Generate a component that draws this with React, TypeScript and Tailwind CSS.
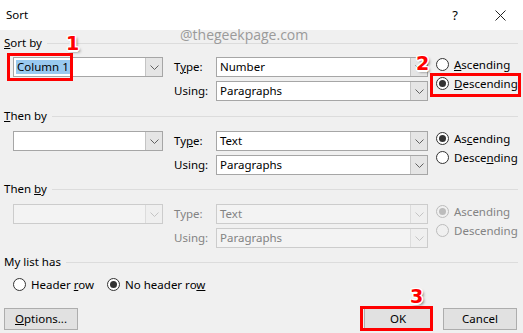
import React from 'react';

const Chevron = ({ disabled }: { disabled?: boolean }) => (
  <svg width="9" height="5" viewBox="0 0 9 5">
    <polyline points="0.5,0.5 4.5,4.5 8.5,0.5" fill="none" stroke={disabled ? '#c4c4c4' : '#606060'} strokeWidth="1" />
  </svg>
);

const Combo = ({ value, disabled, selected, width }: { value?: string; disabled?: boolean; selected?: boolean; width: string }) => (
  <div className={`flex h-[20px] border ${width} ${disabled ? 'border-[#cccccc] bg-[#f3f3f3] text-[#838383]' : 'border-[#a6a6a6] bg-white text-black'}`}>
    <div className="flex-1 flex items-center pl-[2px] overflow-hidden">
      {value && <span className={`px-[1px] leading-[14px] ${selected ? 'bg-[#99c9ef]' : ''}`}>{value}</span>}
    </div>
    <div className={`w-[17px] flex items-center justify-center border-l ${disabled ? 'border-[#dcdcdc] bg-[#efefef]' : 'border-[#c4c4c4] bg-[#e5e5e5]'}`}>
      <Chevron disabled={disabled} />
    </div>
  </div>
);

const Radio = ({ checked, disabled, children }: { checked?: boolean; disabled?: boolean; children: React.ReactNode }) => (
  <div className={`flex items-center gap-[5px] h-[19px] ${disabled ? 'text-[#838383]' : 'text-black'}`}>
    <span className={`w-[13px] h-[13px] rounded-full border flex items-center justify-center ${disabled ? 'border-[#bcbcbc] bg-[#f0f0f0]' : 'border-[#333333] bg-white'}`}>
      {checked && <span className={`w-[7px] h-[7px] rounded-full ${disabled ? 'bg-[#bcbcbc]' : 'bg-[#333333]'}`} />}
    </span>
    <span>{children}</span>
  </div>
);

const Header = ({ children, className }: { children: React.ReactNode; className?: string }) => (
  <div className={`flex items-center h-[16px] pl-[4px] pr-[5px] ${className ?? ''}`}>
    <span>{children}</span>
    <div className="flex-1 h-px bg-[#dcdcdc] ml-[5px]" />
  </div>
);

type GroupProps = {
  combo?: string;
  selected?: boolean;
  disabled?: boolean;
  type: string;
  typeLabel: React.ReactNode;
  ascLabel: React.ReactNode;
  descLabel: React.ReactNode;
  descending?: boolean;
  className?: string;
};

const Group = ({ combo, selected, disabled, type, typeLabel, ascLabel, descLabel, descending, className }: GroupProps) => (
  <div className={`flex pl-[13px] ${className ?? ''}`}>
    <Combo value={combo} selected={selected} disabled={disabled} width="w-[150px]" />
    <div className={`ml-[11px] flex flex-col gap-[4px] ${disabled ? 'text-[#838383]' : ''}`}>
      <div className="flex items-center h-[20px]">
        <span className="w-[42px]">{typeLabel}</span>
        <Combo value={type} disabled={disabled} width="w-[212px]" />
      </div>
      <div className="flex items-center h-[20px]">
        <span className="w-[42px]">Using:</span>
        <Combo value="Paragraphs" disabled={disabled} width="w-[212px]" />
      </div>
    </div>
    <div className="ml-[8px] -mt-[2px] flex flex-col">
      <Radio checked={!descending} disabled={disabled}>{ascLabel}</Radio>
      <Radio checked={descending} disabled={disabled}>{descLabel}</Radio>
    </div>
  </div>
);

const Button = ({ children, className }: { children: React.ReactNode; className?: string }) => (
  <div className={`h-[22px] flex items-center justify-center border border-[#adadad] bg-[#e1e1e1] ${className ?? ''}`}>{children}</div>
);

const Step = ({ n, className }: { n: string; className: string }) => (
  <span className={`absolute font-['DejaVu_Sans',sans-serif] font-bold text-[19px] leading-none text-[#ff0000] [text-shadow:1.5px_0_0_#fff,-1.5px_0_0_#fff,0_1.5px_0_#fff,0_-1.5px_0_#fff,1px_1px_0_#fff,-1px_-1px_0_#fff,1px_-1px_0_#fff,-1px_1px_0_#fff,2px_2px_3px_rgba(0,0,0,0.55)] ${className}`}>
    {n}
  </span>
);

export default function App() {
  return (
    <div className="relative w-[523px] h-[333px] bg-[#f0f0f0] text-[11.5px] leading-[16px] text-black font-['Noto_Sans',sans-serif] overflow-hidden">
      <div className="h-[30px] bg-white flex items-center pl-[6px] pr-[17px]">
        <span className="flex-1">Sort</span>
        <span className="mr-[37px] text-[13px]">?</span>
        <svg width="11" height="11" viewBox="0 0 11 11">
          <path d="M0.5 0.5 L10.5 10.5 M10.5 0.5 L0.5 10.5" stroke="#222" strokeWidth="1" />
        </svg>
      </div>

      <Header className="mt-[5px]"><span className="underline">S</span>ort by</Header>
      <Group
        className="mt-[6px]"
        combo="Column 1"
        selected
        type="Number"
        typeLabel={<>T<span className="underline">y</span>pe:</>}
        ascLabel={<><span className="underline">A</span>scending</>}
        descLabel={<><span className="underline">D</span>escending</>}
        descending
      />

      <Header className="mt-[7px]"><span className="underline">T</span>hen by</Header>
      <Group
        className="mt-[7px]"
        type="Text"
        typeLabel={<>Ty<span className="underline">p</span>e:</>}
        ascLabel={<>As<span className="underline">c</span>ending</>}
        descLabel={<>Desce<span className="underline">n</span>ding</>}
      />

      <Header className="mt-[6px]">Then <span className="underline">b</span>y</Header>
      <Group
        className="mt-[7px]"
        disabled
        type="Text"
        typeLabel="Type:"
        ascLabel="Ascending"
        descLabel="Descending"
      />

      <Header className="mt-[6px]">My list has</Header>
      <div className="mt-[5px] flex items-center pl-[13px] gap-[13px]">
        <Radio>Header <span className="underline">r</span>ow</Radio>
        <Radio checked>No header ro<span className="underline">w</span></Radio>
      </div>

      <div className="mt-[14px] flex items-center px-[4px]">
        <Button className="w-[74px]"><span className="underline">O</span>ptions...</Button>
        <div className="flex-1" />
        <Button className="w-[68px]">OK</Button>
        <Button className="w-[74px] ml-[11px] mr-[2px]">Cancel</Button>
      </div>

      <span className="absolute left-[180px] top-[26px] text-[14px] leading-[17px] text-[#9a9a9a] font-['Open_Sans',sans-serif]">@thegeekpage.com</span>

      <div className="absolute left-[7px] top-[53px] w-[66px] h-[28px] border-[3px] border-[#ff0000]" />
      <div className="absolute left-[430px] top-[73px] w-[91px] h-[24px] border-[3px] border-[#ff0000]" />
      <div className="absolute left-[360px] top-[306px] w-[73px] h-[25px] border-[3px] border-[#ff0000]" />

      <Step n="1" className="left-[66px] top-[34px]" />
      <Step n="2" className="left-[416px] top-[54px]" />
      <Step n="3" className="left-[410px] top-[287px]" />
    </div>
  );
}
